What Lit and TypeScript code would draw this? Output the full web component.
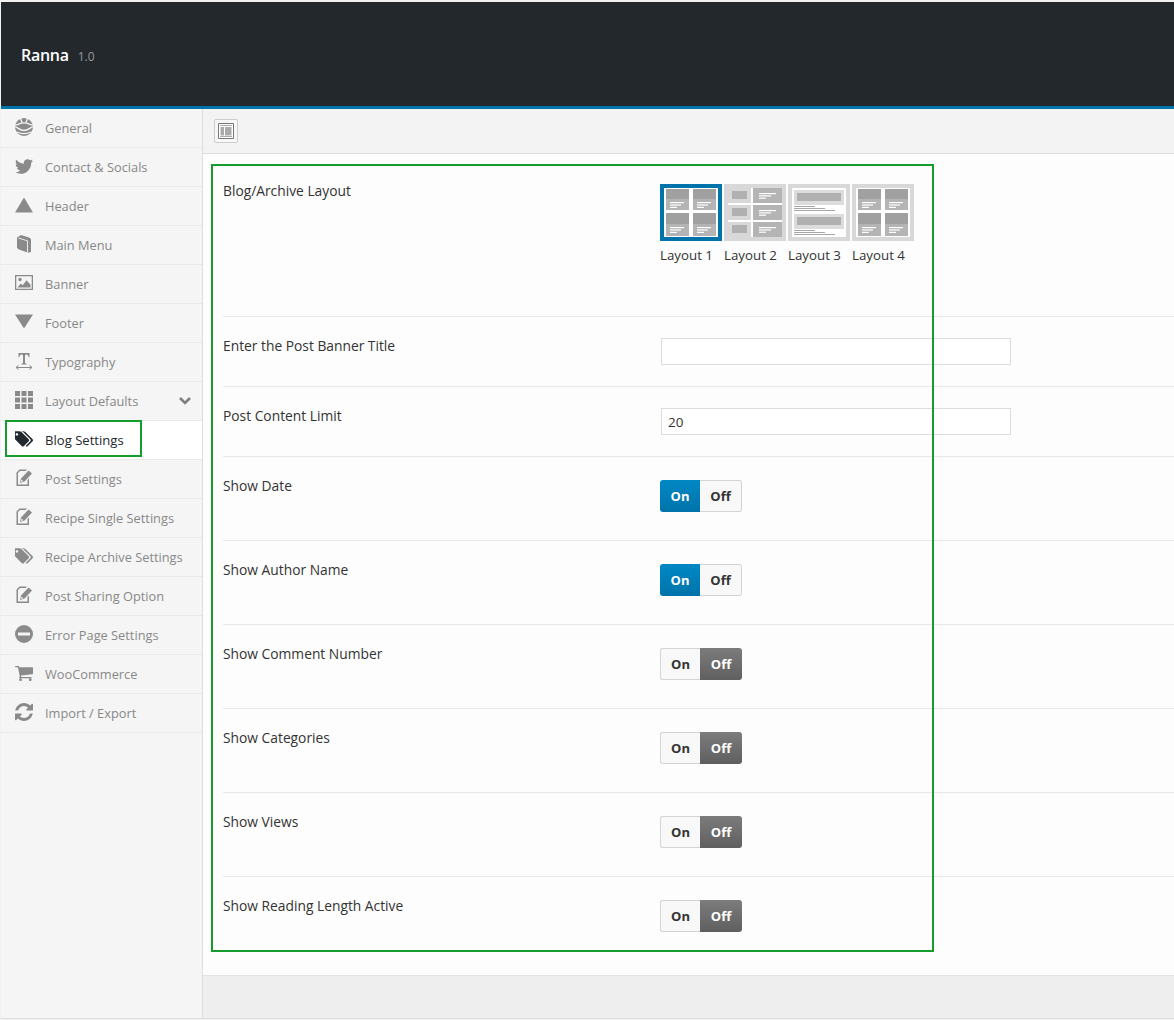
import { LitElement, html, css, svg } from "lit";
import { customElement } from "lit/decorators.js";

const crop = (d: string, vb: string, w: number, h: number) =>
  html`<svg viewBox=${vb} width=${w} height=${h} fill="currentColor"><path d=${d}></path></svg>`;
const TAGS = "M384 448q0-53-37.5-90.5t-90.5-37.5-90.5 37.5-37.5 90.5 37.5 90.5 90.5 37.5 90.5-37.5 37.5-90.5zm1067 576q0 53-37 90l-491 492q-39 37-91 37-53 0-90-37l-715-716q-38-37-64.5-101t-26.5-117v-416q0-52 38-90t90-38h416q53 0 117 26.5t102 64.5l715 714q37 39 37 91zm384 0q0 53-37 90l-491 492q-39 37-91 37-36 0-59-14t-53-45l470-470q37-37 37-90 0-52-37-91l-715-714q-38-38-102-64.5t-117-26.5h224q53 0 117 26.5t102 64.5l715 714q37 39 37 91z";
const box = (c: any) => html`<svg viewBox="0 0 18 18" width="18" height="18" fill="currentColor">${c}</svg>`;
const editIcon = box(svg`<path d="M4.500 .5H12L10.500 2H5L3 4v11.500h9.500V11L14 9.500V17H1.500V3.500z"/><path d="M13.500 1.500l3.500 3-7.500 8-4.500 1.500 1-4.500z"/><path d="M6.500 10.500l1.800 1.700-2.400.8z" fill="#f5f5f5"/>`);

const icons: Record<string, unknown> = {
  general: box(svg`<circle cx="9" cy="9" r="9"/><g fill="none" stroke="#f5f5f5" stroke-width="1.300"><path d="M0 6.500C3 8 3.500 4.800 9 4.800S15 8 18 6.500"/><path d="M0 8.500C3.500 10 5 12.500 9 12.500S14.500 10 18 8.500"/><path d="M2 14C6 16 12 16 16 14"/><path d="M5.500 0 7 4.800M12.500 0 11 4.800"/></g>`),
  twitter: crop("M1684 408q-67 98-162 167 1 14 1 42 0 130-38 259.5t-115.5 248.5-184.5 210.5-258 146-323 54.5q-271 0-496-145 35 4 76 4 225 0 401-138-105-2-188-64.5t-114-159.5q33 5 61 5 43 0 85-11-112-23-185.5-111.5t-73.5-205.5v-4q68 38 146 41-66-44-105-115t-39-154q0-88 44-163 121 149 294.5 238.500t371.500 99.500q-8-38-8-74 0-134 94.500-228.500t228.500-94.500q140 0 236 102 109-21 205-78-37 115-142 178 92-10 184-50z", "108 280 1576 1240", 18, 15),
  up: box(svg`<path d="M9 1.500l9 15H0z"/>`),
  down: box(svg`<path d="M0 1.500h18L9 15.500z"/>`),
  book: box(svg`<path d="M2 2.500 6 0l8 2.500L16 4v13l-3 .8-9-3.300-2-1.500z"/><path d="M3.300 3 12.500 5.800V17.500" stroke="#f5f5f5" stroke-width=".9" fill="none"/>`),
  image: box(svg`<path d="M0 1h18v15H0zm1.300 1.300v12.400h15.400V2.300z" fill-rule="evenodd"/><circle cx="5" cy="5.500" r="1.700"/><path d="M2.500 13.500l3.200-4 2 1.800 3.800-5 4 4.500v2.700z"/>`),
  type: box(svg`<path d="M3.500 1h11v4h-1l-.6-2.300H10v8.500l1.500.4v.9h-5v-.9l1.500-.4V2.700H5.100L4.500 5h-1z"/><path d="M1 15.500h16M1 15.500l2.500-2M1 15.500l2.500 2M17 15.500l-2.500-2M17 15.500l-2.500 2" stroke="currentColor" stroke-width="1" fill="none"/>`),
  grid: box(svg`<path d="M0 0h5v5H0zM6.500 0h5v5h-5zM13 0h5v5h-5zM0 6.500h5v5H0zM6.500 6.500h5v5h-5zM13 6.500h5v5h-5zM0 13h5v5H0zM6.500 13h5v5h-5zM13 13h5v5h-5z"/>`),
  tags: crop(TAGS, "64 192 1771 1416", 18, 16),
  edit: editIcon,
  minus: box(svg`<path d="M9 0a9 9 0 1 1 0 18A9 9 0 0 1 9 0zM3 7.500v3h12v-3z" fill-rule="evenodd"/>`),
  cart: crop("M704 1536q0 52-38 90t-90 38-90-38-38-90 38-90 90-38 90 38 38 90zm896 0q0 52-38 90t-90 38-90-38-38-90 38-90 90-38 90 38 38 90zm128-1088v512q0 24-16.5 42.5t-40.5 21.5l-1044 122q13 60 13 70 0 16-24 64h920q26 0 45 19t19 45-19 45-45 19h-1024q-26 0-45-19t-19-45q0-11 8-31.5t16-36 21.5-40 15.5-29.5l-177-823h-204q-26 0-45-19t-19-45 19-45 45-19h256q16 0 28.5 6.5t19.5 15.5 13 24.5 8 26 5.500 29.5 4.500 26h1201q26 0 45 19t19 45z", "64 256 1664 1408", 18, 17),
  refresh: crop("M1639 1056q0 5-1 7-64 268-268 434.5t-478 166.5q-146 0-282.5-55t-243.5-157l-129 129q-19 19-45 19t-45-19-19-45v-448q0-26 19-45t45-19h448q26 0 45 19t19 45-19 45l-137 137q71 66 161 102t187 36q134 0 250-65t186-179q11-17 53-117 8-23 30-23h192q13 0 22.500 9.500t9.500 22.500zm25-800v448q0 26-19 45t-45 19h-448q-26 0-45-19t-19-45 19-45l138-138q-148-137-349-137-134 0-250 65t-186 179q-11 17-53 117-8 23-30 23h-199q-13 0-22.500-9.500t-9.500-22.500v-7q65-268 270-434.500t480-166.500q146 0 284 55.500t245 156.500l130-129q19-19 45-19t45 19 19 45z", "128 128 1536 1536", 18, 18),
};

const menu = [
  ["General", "general"], ["Contact & Socials", "twitter"], ["Header", "up"], ["Main Menu", "book"],
  ["Banner", "image"], ["Footer", "down"], ["Typography", "type"], ["Layout Defaults", "grid"],
  ["Blog Settings", "tags"], ["Post Settings", "edit"], ["Recipe Single Settings", "edit"],
  ["Recipe Archive Settings", "tags"], ["Post Sharing Option", "edit"], ["Error Page Settings", "minus"],
  ["WooCommerce", "cart"], ["Import / Export", "refresh"],
];

const cell = (x: number, y: number, w = 23, h = 21, head = 10) => svg`
  <rect x=${x} y=${y} width=${w} height=${head} fill="#a0a0a0"/>
  <rect x=${x} y=${y + head} width=${w} height=${h - head} fill="#b4b4b4"/>
  <rect x=${x + 4} y=${y + head + 3} width="14" height="1.200" fill="#fff"/>
  <rect x=${x + 4} y=${y + head + 5.400} width="11" height="1.200" fill="#fff"/>
  <rect x=${x + 4} y=${y + head + 7.800} width="7" height="1.200" fill="#fff"/>`;

const fourUp = svg`<rect x="4" y="4" width="54" height="49" fill="#fff"/>${cell(6, 5)}${cell(33, 5)}${cell(6, 29, 23, 23, 11)}${cell(33, 29, 23, 23, 11)}`;
const sideCell = (y: number) => svg`
  <rect x="29" y=${y} width="29" height="15" fill="#b4b4b4"/>
  <rect x="35" y=${y + 5} width="17" height="1.200" fill="#fff"/>
  <rect x="35" y=${y + 7.300} width="12" height="1.200" fill="#fff"/>
  <rect x="35" y=${y + 9.600} width="7" height="1.200" fill="#fff"/>
  <rect x="8" y=${y + 3} width="15" height="8" fill="#b0b0b0"/>`;
const wide = (y: number) => svg`
  <rect x="6" y=${y} width="50" height="15" fill="#dcdcdc"/>
  <rect x="9" y=${y + 3} width="44" height="8" fill="#b0b0b0"/>
  <rect x="6" y=${y + 16} width="21" height="1" fill="#a8a8a8"/>
  <rect x="6" y=${y + 18} width="31" height="1" fill="#a8a8a8"/>
  <rect x="6" y=${y + 20} width="41" height="1" fill="#a8a8a8"/>`;
const thumbs = [
  fourUp,
  svg`<rect x="27" y="4" width="2" height="49" fill="#fff"/><rect x="4" y="19" width="54" height="2" fill="#fff"/><rect x="4" y="36" width="54" height="2" fill="#fff"/>${sideCell(4)}${sideCell(21)}${sideCell(38)}`,
  svg`<rect x="4" y="4" width="54" height="49" fill="#fff"/>${wide(6)}${wide(30)}`,
  fourUp,
];

const toggles: [string, boolean][] = [
  ["Show Date", true], ["Show Author Name", true], ["Show Comment Number", false],
  ["Show Categories", false], ["Show Views", false], ["Show Reading Length Active", false],
];

@customElement("app-root")
export class AppRoot extends LitElement {
  static styles = css`
    :host { display: block; position: relative; width: 1174px; height: 1020px; box-sizing: border-box; padding: 2px 0 0 1px; background: #f1f1f1; font-family: "Open Sans", sans-serif; overflow: hidden; }
    .top { height: 104px; background: #23282d; border-bottom: 3px solid #0073aa; display: flex; align-items: center; padding-left: 20px; color: #fff; }
    .brand { font-size: 16px; font-weight: 600; letter-spacing: -0.3px; position: relative; top: 1px; }
    .ver { font-size: 12px; color: #999; margin-left: 9px; position: relative; top: 2px; }
    .main { display: flex; height: 910px; box-sizing: border-box; border-bottom: 1px solid #ddd; }
    .side { width: 201px; flex: none; background: #f5f5f5; border-right: 1px solid #ddd; }
    .item { height: 38px; border-bottom: 1px solid #e9e9e9; display: flex; align-items: center; color: #888; font-size: 12.8px; }
    .ic { width: 44px; flex: none; display: flex; justify-content: center; padding-left: 2px; box-sizing: border-box; color: #8a8a8a; position: relative; top: -1px; }
    .lb { flex: 1; }
    .item.active { background: #fff; color: #23282d; font-weight: 500; font-size: 13.1px; }
    .item.active .ic { color: #23282d; }
    .chev { margin-right: 10px; display: flex; }
    .content { flex: 1; display: flex; flex-direction: column; min-width: 0; }
    .bar { height: 44px; background: #f3f3f3; border-bottom: 1px solid #ddd; display: flex; align-items: center; padding-left: 11px; flex: none; }
    .barbtn { width: 24px; height: 24px; box-sizing: border-box; border: 1px solid #ccc; border-radius: 2px; background: #f7f7f7; display: flex; align-items: center; justify-content: center; }
    .form { background: #fdfdfd; flex: none; height: 821px; box-sizing: border-box; padding-left: 20px; color: #333; }
    .row { display: grid; grid-template-columns: 437px 1fr; border-bottom: 1px solid #e8e8e8; box-sizing: border-box; }
    .row:last-child { border-bottom: 0; }
    .label { font-size: 13.8px; font-weight: 500; color: #333; line-height: 18px; }
    .r1 { height: 163px; padding-top: 28px; }
    .r2 { height: 70px; padding-top: 20px; }
    .r3 { height: 84px; padding-top: 20px; }
    .thumbs { display: flex; gap: 2px; margin-top: 2px; }
    .thumb { width: 62px; font-size: 13.3px; color: #333; line-height: 18px; white-space: nowrap; }
    .thumb svg { display: block; margin-bottom: 5px; }
    input { display: block; width: 350px; height: 27px; margin: 1px 0 0 1px; box-sizing: border-box; border: 1px solid #ddd; background: #fff; padding: 0 6px; font: 13.5px "Open Sans", sans-serif; color: #333; outline: none; }
    .tog { display: flex; width: 82px; height: 32px; font-size: 13px; font-weight: 700; margin-top: 3px; }
    .tog div { display: flex; align-items: center; justify-content: center; box-sizing: border-box; }
    .a { width: 40px; border-radius: 3px 0 0 3px; }
    .b { width: 42px; border-radius: 0 3px 3px 0; }
    .neutral { background: #f8f8f8; color: #333; border: 1px solid #d4d4d4; }
    .a.neutral { border-right: 0; }
    .b.neutral { border-left: 0; }
    .on { background: linear-gradient(#0088c4, #0073aa); color: #fff; }
    .off { background: linear-gradient(#7c7c7c, #5f5f5f); color: #fff; }
    .foot { flex: 1; background: #eeeeee; border-top: 1px solid #e4e4e4; }
    .mark { position: absolute; border: 2px solid #169c2c; box-sizing: border-box; pointer-events: none; }
    .m1 { left: 5px; top: 420px; width: 137px; height: 37px; }
    .m2 { left: 211px; top: 164px; width: 723px; height: 788px; }
  `;

  render() {
    return html`
      <div class="top"><span class="brand">Ranna</span><span class="ver">1.0</span></div>
      <div class="main">
        <nav class="side">
          ${menu.map(([label, ic]) => html`
            <div class="item ${label === "Blog Settings" ? "active" : ""}">
              <span class="ic">${icons[ic]}</span>
              <span class="lb">${label}</span>
              ${label === "Layout Defaults" ? html`<span class="chev"><svg width="14" height="10" viewBox="0 0 14 10"><path d="M2 2l5 5 5-5" fill="none" stroke="#808080" stroke-width="2.600"/></svg></span>` : ""}
            </div>`)}
        </nav>
        <section class="content">
          <div class="bar">
            <div class="barbtn"><svg width="16" height="16" viewBox="0 0 16 16"><path d="M.5.5h15v15H.5z" fill="#fff" stroke="#777"/><path d="M2 2h12v1H2zM2 13h12v1H2z" fill="#aaa"/><path d="M2.500 4h3.500v8.500H2.500z" fill="#aaa"/><path d="M7 4h6.500v8.500H7z" fill="#aaa"/></svg></div>
          </div>
          <div class="form">
            <div class="row r1">
              <div class="label">Blog/Archive Layout</div>
              <div class="thumbs">
                ${thumbs.map((t, i) => html`<div class="thumb"><svg width="62" height="57" viewBox="0 0 62 57"><rect width="62" height="57" fill=${i === 0 ? "#0073aa" : "#d8d8d8"}></rect>${t}</svg>Layout ${i + 1}</div>`)}
              </div>
            </div>
            <div class="row r2"><div class="label">Enter the Post Banner Title</div><div><input value=""></div></div>
            <div class="row r2"><div class="label">Post Content Limit</div><div><input value="20"></div></div>
            ${toggles.map(([l, v]) => html`<div class="row r3"><div class="label">${l}</div>
              <div class="tog"><div class="a ${v ? "on" : "neutral"}">On</div><div class="b ${v ? "neutral" : "off"}">Off</div></div></div>`)}
          </div>
          <div class="foot"></div>
        </section>
      </div>
      <div class="mark m1"></div>
      <div class="mark m2"></div>
    `;
  }
}
